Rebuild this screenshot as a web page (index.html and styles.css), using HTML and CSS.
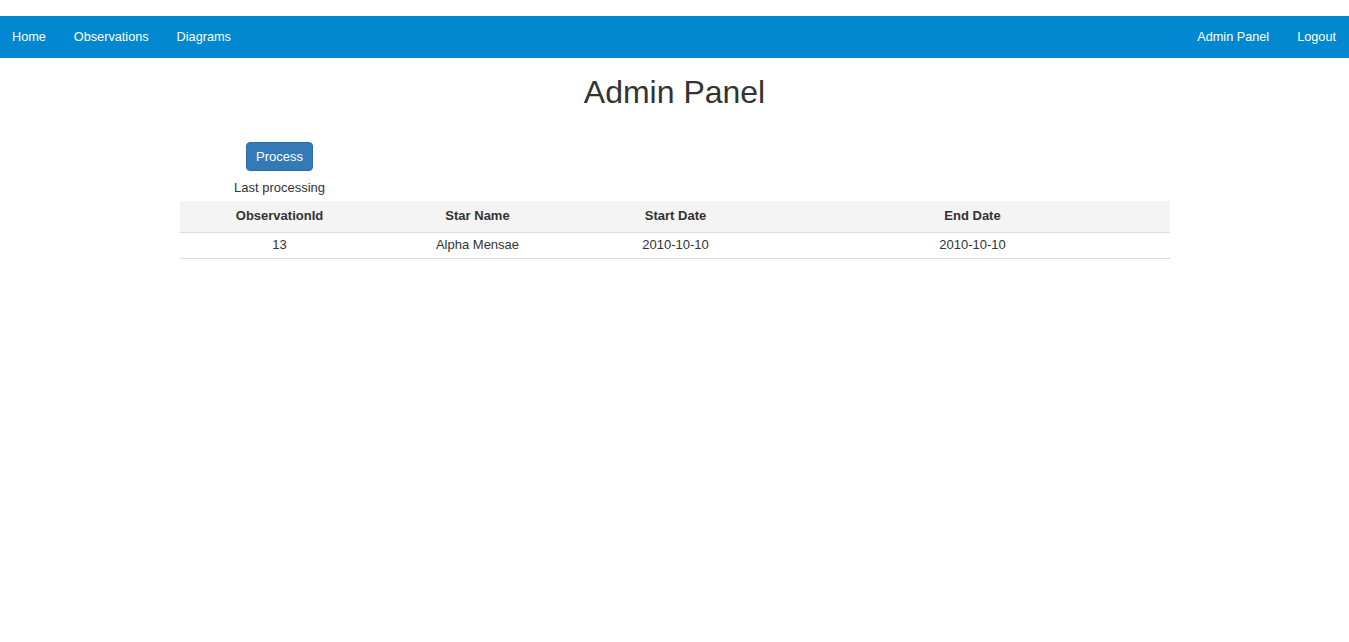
FILE: index.html
```html
<!DOCTYPE html>
<html>
<head>
<meta charset="utf-8">
<link rel="stylesheet" href="styles.css">
</head>
<body>
<nav class="navbar">
  <ul class="nav-group">
    <li><a href="#">Home</a></li>
    <li><a href="#">Observations</a></li>
    <li><a href="#">Diagrams</a></li>
  </ul>
  <ul class="nav-group nav-right">
    <li><a href="#">Admin Panel</a></li>
    <li><a href="#">Logout</a></li>
  </ul>
</nav>
<main class="content">
  <h1 class="title">Admin Panel</h1>
  <div class="panel">
    <div class="actions">
      <button class="btn">Process</button>
      <div class="last">Last processing</div>
    </div>
    <table class="grid">
      <thead>
        <tr>
          <th class="c1">ObservationId</th>
          <th class="c2">Star Name</th>
          <th class="c3">Start Date</th>
          <th class="c4">End Date</th>
        </tr>
      </thead>
      <tbody>
        <tr>
          <td>13</td>
          <td>Alpha Mensae</td>
          <td>2010-10-10</td>
          <td>2010-10-10</td>
        </tr>
      </tbody>
    </table>
  </div>
</main>
</body>
</html>
```
FILE: styles.css
```css
html, body {
  margin: 0;
  padding: 0;
  background: #fff;
  font-family: "Liberation Sans", Arial, sans-serif;
  font-size: 13px;
  color: #333;
}

.navbar {
  margin-top: 16px;
  height: 42px;
  background: #0288d1;
  display: flex;
  justify-content: space-between;
  align-items: center;
  padding: 0 13px 0 12px;
}

.nav-group {
  list-style: none;
  margin: 0;
  padding: 0;
  display: flex;
  gap: 28px;
}

.nav-group a {
  color: #fff;
  text-decoration: none;
  font-size: 12.7px;
  line-height: 42px;
  display: block;
}

.content {
  width: 990px;
  margin: 0 auto;
}

.title {
  margin: 17px 0 0;
  font-size: 32px;
  font-weight: normal;
  line-height: 35px;
  text-align: center;
  color: #333;
}

.panel {
  margin-top: 32px;
}

.actions {
  width: 200px;
  display: flex;
  flex-direction: column;
  align-items: center;
}

.btn {
  font-family: "Liberation Sans", Arial, sans-serif;
  font-size: 13px;
  line-height: 17px;
  padding: 5px 9px;
  color: #fff;
  background: #337ab7;
  border: 1px solid #2e6da4;
  border-radius: 4px;
  cursor: pointer;
}

.last {
  margin-top: 8px;
  line-height: 18px;
}

.grid {
  width: 990px;
  margin-top: 4px;
  border-collapse: collapse;
  table-layout: fixed;
}

.grid th,
.grid td {
  box-sizing: border-box;
  text-align: center;
  border-bottom: 1px solid #dddddd;
}

.grid th {
  background: #f4f4f4;
  font-weight: bold;
  line-height: 19px;
  padding: 5px 4px 7px;
}

.grid td {
  line-height: 17px;
  padding: 3px 4px 5px;
}

.c1 { width: 200px; }
.c2 { width: 196px; }
.c3 { width: 200px; }
.c4 { width: auto; }
```
